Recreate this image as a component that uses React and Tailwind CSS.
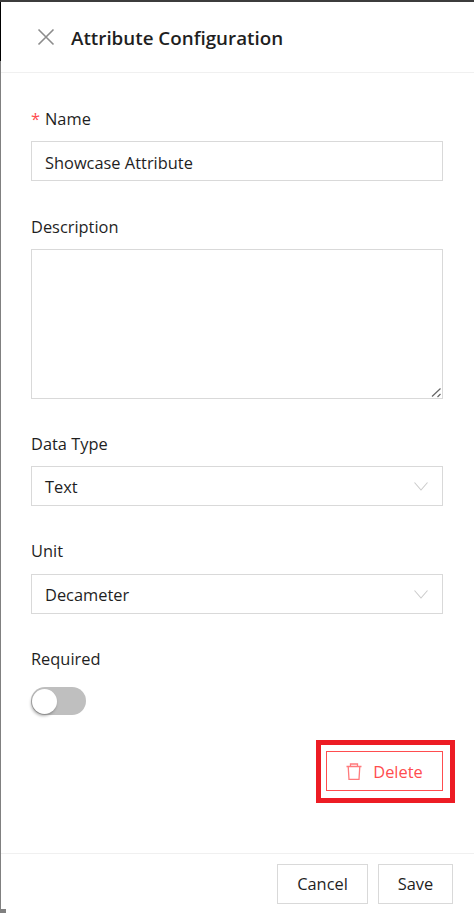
const Label = ({ children, required }) => (
  <label className="block h-[22px] text-[16.4px] leading-[22px] text-[#1f1f1f]">
    {required && <span className="mr-[5px] text-[#ff4d4f]">*</span>}
    {children}
  </label>
);

const SelectBox = ({ value }) => (
  <div className="flex h-[40px] items-center justify-between border border-[#d9d9d9] pl-[14px] pr-[14px] text-[16.4px] text-[#1f1f1f]">
    <span className="relative top-px -left-px">{value}</span>
    <svg width="14" height="9" viewBox="0 0 14 9" fill="none" stroke="#cccccc" strokeWidth="1.1">
      <path d="M.5.5L7 8l6.5-7.5" />
    </svg>
  </div>
);

export default function App() {
  return (
    <div className="relative flex h-[913px] w-[474px] flex-col overflow-hidden bg-white font-['Open_Sans',sans-serif]">
      <div className="h-[2px] bg-[#3c3c3c]" />

      <div className="flex min-h-0 flex-1">
        {/* window edge on the left */}
        <div className="flex w-px flex-col">
          <div className="h-[59px] bg-black" />
          <div className="flex-1 bg-[#808080]" />
        </div>

        <div className="flex min-w-0 flex-1 flex-col">
          {/* header */}
          <div className="flex h-[71px] items-center border-b border-[#f0f0f0] pl-[36px]">
            <svg width="18" height="18" viewBox="0 0 18 18" fill="none" stroke="#8c8c8c" strokeWidth="1.6">
              <path d="M1.5 1.5l15 15M16.5 1.5l-15 15" />
            </svg>
            <h1 className="relative top-px ml-[16px] text-[18.8px] font-semibold text-[#1f1f1f]">
              Attribute Configuration
            </h1>
          </div>

          {/* form */}
          <div className="flex flex-1 flex-col pl-[30px] pr-[31px] pt-[35px]">
            <Label required>Name</Label>
            <input
              readOnly
              value="Showcase Attribute"
              className="mt-[11px] h-[40px] w-full border border-[#d9d9d9] px-[13px] pt-[2px] text-[16.4px] text-[#1f1f1f] outline-none"
            />

            <div className="mt-[35px]">
              <Label>Description</Label>
            </div>
            <div className="relative mt-[11px]">
              <textarea className="block h-[150px] w-full resize-none border border-[#d9d9d9] outline-none" />
              <svg
                className="absolute bottom-[1px] right-[1px]"
                width="11"
                height="11"
                viewBox="0 0 11 11"
                fill="none"
                stroke="#666666"
                strokeWidth="1.2"
              >
                <path d="M1 9.5L9.5 1.5M6.5 10l3-3" />
              </svg>
            </div>

            <div className="mt-[34px]">
              <Label>Data Type</Label>
            </div>
            <div className="mt-[11px]">
              <SelectBox value="Text" />
            </div>

            <div className="mt-[34px]">
              <Label>Unit</Label>
            </div>
            <div className="mt-[12px]">
              <SelectBox value="Decameter" />
            </div>

            <div className="mt-[34px]">
              <Label>Required</Label>
            </div>
            <div className="mt-[17px] flex h-[28px] w-[55px] items-center rounded-full bg-[#bfbfbf] pl-[1px]">
              <div className="h-[25px] w-[25px] rounded-full bg-white shadow-[-1px_2px_3px_rgba(0,0,0,0.3)]" />
            </div>

            <div className="mt-[36px] flex justify-end">
              <div className="relative">
                <button className="flex h-[40px] w-[117px] items-center justify-center gap-[11px] border border-[#ff4d4f] text-[16.4px] text-[#ff4d4f]">
                  <svg width="16" height="17" viewBox="0 0 16 17" fill="none" stroke="#ff7a7c" strokeWidth="1.3">
                    <path d="M.5 3.5h15M4.5 3.5V1h7v2.5M2.2 3.5l.8 13h10l.8-13" />
                  </svg>
                  <span className="relative top-px">Delete</span>
                </button>
                {/* red annotation box */}
                <div className="pointer-events-none absolute -bottom-[12px] -left-[10px] -right-[12px] -top-[11px] border-[5px] border-[#ed1c24]" />
              </div>
            </div>
          </div>

          {/* footer */}
          <div className="flex h-[60px] items-start justify-end gap-[10px] border-t border-[#f0f0f0] pr-[21px] pt-[10px]">
            <button className="h-[40px] w-[91px] border border-[#d9d9d9] text-[16.4px] text-[#1f1f1f]">Cancel</button>
            <button className="h-[40px] w-[75px] border border-[#d9d9d9] text-[16.4px] text-[#1f1f1f]">Save</button>
          </div>
        </div>
      </div>

      {/* corner of the window behind */}
      <div className="absolute bottom-0 left-0 h-[4px] w-[6px] bg-[#808080]" />
    </div>
  );
}
